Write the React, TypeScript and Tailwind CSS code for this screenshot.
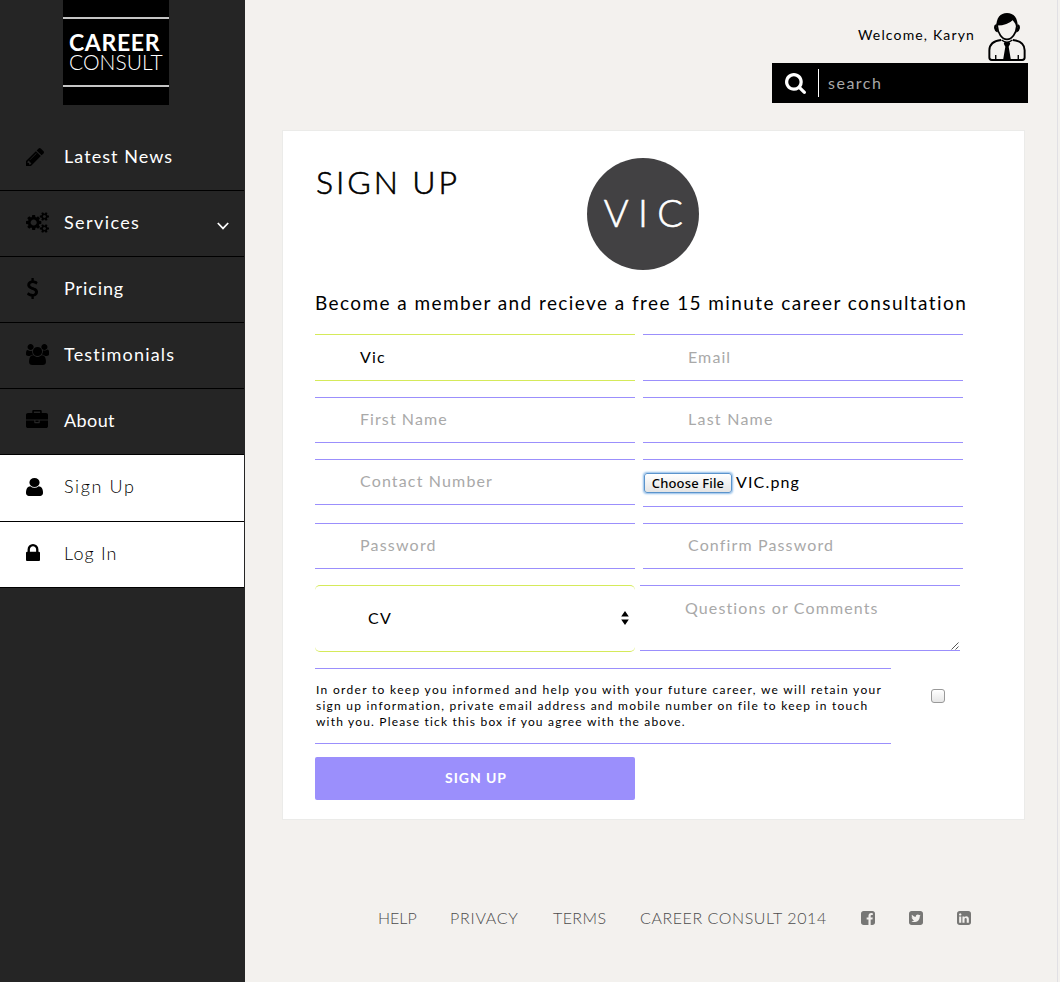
import type { ReactNode } from "react";

const paths = {
  pencil:
    "M491 1536l91-91-235-235-91 91v107h128v128h107zm523-928q0-22-22-22-10 0-17 7l-542 542q-7 7-7 17 0 22 22 22 10 0 17-7l542-542q7-7 7-17zm-54-192l416 416-832 832h-416v-416zm683 96q0 53-37 90l-166 166-416-416 166-165q36-38 90-38 53 0 91 38l235 234q37 39 37 91z",
  cogs:
    "M896 896q0-106-75-181t-181-75-181 75-75 181 75 181 181 75 181-75 75-181zm768 512q0-52-38-90t-90-38-90 38-38 90q0 53 37.5 90.5t90.5 37.5 90.5-37.5 37.5-90.5zm0-1024q0-52-38-90t-90-38-90 38-38 90q0 53 37.5 90.5t90.5 37.5 90.5-37.5 37.5-90.5zm-384 421v185q0 10-7 19.5t-16 10.5l-155 24q-11 35-32 76 34 48 90 115 7 11 7 20 0 12-7 19-23 30-82.5 89.5t-78.5 59.5q-11 0-21-7l-115-90q-37 19-77 31-11 108-23 155-7 24-30 24h-186q-11 0-20-7.5t-10-17.5l-23-153q-34-10-75-31l-118 89q-7 7-20 7-11 0-21-8-144-133-144-160 0-9 7-19 10-14 41-53t47-61q-23-44-35-82l-152-24q-10-1-17-9.5t-7-19.5v-185q0-10 7-19.5t16-10.5l155-24q11-35 32-76-34-48-90-115-7-11-7-20 0-12 7-20 22-30 82-89t79-59q11 0 21 7l115 90q34-18 77-32 11-108 23-154 7-24 30-24h186q11 0 20 7.5t10 17.5l23 153q34 10 75 31l118-89q8-7 20-7 11 0 21 8 144 133 144 160 0 8-7 19-12 16-42 54t-45 60q23 48 34 82l152 23q10 2 17 10.5t7 19.5zm640 533v140q0 16-149 31-12 27-30 52 51 113 51 138 0 4-4 7-122 71-124 71-8 0-46-47t-52-68q-20 2-30 2t-30-2q-14 21-52 68t-46 47q-2 0-124-71-4-3-4-7 0-25 51-138-18-25-30-52-149-15-149-31v-140q0-16 149-31 13-29 30-52-51-113-51-138 0-4 4-7 4-2 35-20t59-34 30-16q8 0 46 46.5t52 67.5q20-2 30-2t30 2q51-71 92-112l6-2q4 0 124 70 4 3 4 7 0 25-51 138 17 23 30 52 149 15 149 31zm0-1024v140q0 16-149 31-12 27-30 52 51 113 51 138 0 4-4 7-122 71-124 71-8 0-46-47t-52-68q-20 2-30 2t-30-2q-14 21-52 68t-46 47q-2 0-124-71-4-3-4-7 0-25 51-138-18-25-30-52-149-15-149-31v-140q0-16 149-31 13-29 30-52-51-113-51-138 0-4 4-7 4-2 35-20t59-34 30-16q8 0 46 46.5t52 67.5q20-2 30-2t30 2q51-71 92-112l6-2q4 0 124 70 4 3 4 7 0 25-51 138 17 23 30 52 149 15 149 31z",
  dollar:
    "M1362 1185q0 153-99.5 263.5t-258.5 136.5v175q0 14-9 23t-23 9h-135q-13 0-22.5-9.5t-9.5-22.5v-175q-66-9-127.5-31t-101.5-44.5-74-48-46.5-37.5-17.5-18q-17-21-2-41l103-135q7-10 23-12 15-2 24 9l2 2q113 99 243 125 37 8 74 8 81 0 142.5-43t61.5-122q0-28-15-53t-33.5-42-58.5-37.5-66-32-80-32.5q-39-16-61.5-25t-61.5-26.5-62.5-31-56.5-35.5-53.5-42.5-43.5-49-35.5-58-21-66.5-8.5-78q0-138 98-242t255-134v-180q0-13 9.5-22.5t22.5-9.5h135q14 0 23 9t9 23v176q57 6 110.5 23t87 33.5 63.5 37.5 39 29 15 14q17 18 5 38l-81 146q-8 15-23 16-14 3-27-7-3-3-14.5-12t-39-26.5-58.5-32-74.5-26-85.5-11.5q-95 0-155 43t-60 111q0 26 8.5 48t29.5 41.5 39.5 33 56 31 60.5 27 70 27.5q53 20 81 31.5t76 35 75.5 42.5 62 50 53 63.5 31.5 76.5 13 94z",
  users:
    "M593 896q-162 5-265 128h-134q-82 0-138-40.5t-56-118.5q0-353 124-353 6 0 43.5 21t97.5 42.5 119 21.5q67 0 133-23-5 37-5 66 0 159 93 293zm1071 637q0 120-73 189.5t-194 69.5h-874q-121 0-194-69.5t-73-189.5q0-53 3.5-103.5t14-109 26.5-108.5 43-97.5 62-81 85.5-53.5 111.5-20q10 0 43 21.5t73 48 107 48 135 21.5 135-21.5 107-48 73-48 43-21.5q61 0 111.5 20t85.5 53.5 62 81 43 97.5 26.5 108.5 14 109 3.5 103.5zm-1024-1277q0 106-75 181t-181 75-181-75-75-181 75-181 181-75 181 75 75 181zm704 384q0 159-112.5 271.5t-271.5 112.5-271.5-112.5-112.5-271.5 112.5-271.5 271.5-112.5 271.5 112.5 112.5 271.5zm576 225q0 78-56 118.5t-138 40.5h-134q-103-123-265-128 93-134 93-293 0-29-5-66 66 23 133 23 59 0 119-21.5t97.5-42.5 43.5-21q124 0 124 353zm-128-609q0 106-75 181t-181 75-181-75-75-181 75-181 181-75 181 75 75 181z",
  briefcase:
    "M640 256h512v-128h-512v128zm1152 640v480q0 66-47 113t-113 47h-1472q-66 0-113-47t-47-113v-480h672v160q0 26 19 45t45 19h320q26 0 45-19t19-45v-160h672zm-768 0v128h-256v-128h256zm768-480v384h-1792v-384q0-66 47-113t113-47h352v-160q0-40 28-68t68-28h576q40 0 68 28t28 68v160h352q66 0 113 47t47 113z",
  user:
    "M1536 1399q0 109-62.5 187t-150.5 78h-854q-88 0-150.5-78t-62.5-187q0-85 8.5-160.5t31.5-152 58.5-131 94-89 134.5-34.5q131 128 313 128t313-128q76 0 134.5 34.5t94 89 58.5 131 31.5 152 8.5 160.5zm-256-887q0 159-112.5 271.5t-271.5 112.5-271.5-112.5-112.5-271.5 112.5-271.5 271.5-112.5 271.5 112.5 112.5 271.5z",
  lock:
    "M640 768h512v-192q0-106-75-181t-181-75-181 75-75 181v192zm832 96v576q0 40-28 68t-68 28h-960q-40 0-68-28t-28-68v-576q0-40 28-68t68-28h32v-192q0-184 132-316t316-132 316 132 132 316v192h32q40 0 68 28t28 68z",
  search:
    "M1216 832q0-185-131.5-316.5t-316.5-131.5-316.5 131.5-131.5 316.5 131.5 316.5 316.5 131.5 316.5-131.5 131.5-316.5zm512 832q0 52-38 90t-90 38q-54 0-90-38l-343-342q-179 124-399 124-143 0-273.5-55.5t-225-150-150-225-55.5-273.5 55.5-273.5 150-225 225-150 273.5-55.5 273.5 55.5 225 150 150 225 55.5 273.5q0 220-124 399l343 343q37 37 37 90z",
  facebook:
    "M1376 128q119 0 203.5 84.5t84.5 203.5v960q0 119-84.5 203.5t-203.5 84.5h-188v-595h199l30-232h-229v-148q0-56 23.5-84t91.5-28l122-1v-207q-63-9-178-9-136 0-217.5 80t-81.5 226v171h-200v232h200v595h-532q-119 0-203.5-84.5t-84.5-203.5v-960q0-119 84.5-203.5t203.5-84.5h960z",
  twitter:
    "M1408 610q-56 25-121 34 68-40 93-117-65 38-134 51-61-66-153-66-87 0-148.5 61.5t-61.5 148.5q0 29 5 48-129-7-242-65t-192-155q-29 50-29 106 0 114 91 175-47-1-100-26v2q0 75 50 133.5t123 72.5q-29 8-51 8-13 0-39-4 21 63 74.5 104t121.5 42q-116 90-261 90-26 0-50-3 148 94 322 94 112 0 210-35.5t168-95 120.5-137 75-162 24.5-168.5q0-18-1-27 63-45 105-109zm256-194v960q0 119-84.5 203.5t-203.5 84.5h-960q-119 0-203.5-84.5t-84.5-203.5v-960q0-119 84.5-203.5t203.5-84.5h960q119 0 203.5 84.5t84.5 203.5z",
  linkedin:
    "M365 1414h231v-694h-231v694zm246-908q-1-52-36-86t-93-34-94.5 34-36.5 86q0 51 35.5 85.5t92.5 34.5h1q59 0 95-34.5t36-85.5zm585 908h231v-398q0-154-73-233t-193-79q-136 0-209 117h2v-101h-231q3 66 0 694h231v-388q0-38 7-56 15-35 45-59.5t74-24.5q116 0 116 157v371zm468-998v960q0 119-84.5 203.5t-203.5 84.5h-960q-119 0-203.5-84.5t-84.5-203.5v-960q0-119 84.5-203.5t203.5-84.5h960q119 0 203.5 84.5t84.5 203.5z",
};

type IconName = keyof typeof paths;

function Icon({ name, box, className }: { name: IconName; box: string; className: string }) {
  return (
    <svg viewBox={box} preserveAspectRatio="none" fill="currentColor" aria-hidden="true" className={className}>
      <path d={paths[name]} />
    </svg>
  );
}

interface NavItem {
  label: string;
  icon: IconName;
  box: string;
  iconClass: string;
  textClass: string;
  rowClass: string;
}

const nav: NavItem[] = [
  { label: "Latest News", icon: "pencil", box: "128 149 1515 1515", iconClass: "w-[18px] h-[18px]", textClass: "tracking-[1.05px]", rowClass: "h-[66px] pb-[2px]" },
  { label: "Services", icon: "cogs", box: "0 0 1920 1792", iconClass: "w-[23px] h-[21px]", textClass: "tracking-[1.4px]", rowClass: "h-[66px] pb-[2px]" },
  { label: "Pricing", icon: "dollar", box: "430 0 932 1792", iconClass: "ml-px w-[11px] h-[21px]", textClass: "tracking-[0.9px]", rowClass: "h-[66px] pb-[2px]" },
  { label: "Testimonials", icon: "users", box: "0 0 1920 1792", iconClass: "w-[23px] h-[21px]", textClass: "tracking-[1.2px]", rowClass: "h-[66px] pb-[2px]" },
  { label: "About", icon: "briefcase", box: "0 0 1792 1536", iconClass: "w-[22px] h-[18px] -mt-[4px]", textClass: "tracking-[0.4px]", rowClass: "h-[66px] pb-[2px]" },
  { label: "Sign Up", icon: "user", box: "256 128 1280 1536", iconClass: "w-[17px] h-[18px]", textClass: "tracking-[1.6px] font-light", rowClass: "h-[67px] pb-[3px] bg-white text-black" },
  { label: "Log In", icon: "lock", box: "320 128 1152 1408", iconClass: "w-[14px] h-[17px] -mt-[2px]", textClass: "tracking-[1.15px] font-light", rowClass: "h-[66px] pb-[3px] bg-white text-black" },
];

function Sidebar() {
  return (
    <aside className="w-[245px] shrink-0 bg-[#252525] text-white">
      <div className="ml-[63px] flex h-[105px] w-[106px] flex-col bg-black">
        <div className="mt-[17px] h-[2px] bg-[#c4c4c4]" />
        <div className="h-[66px] pt-[14px] pl-[6px] whitespace-nowrap">
          <div className="text-[23px] leading-[19px] font-bold tracking-[0.65px]">CAREER</div>
          <div className="text-[21px] leading-[19px] font-light">CONSULT</div>
        </div>
        <div className="h-[2px] bg-[#c4c4c4]" />
      </div>
      <nav className="mr-px mt-5">
        {nav.map((item) => (
          <a
            key={item.label}
            className={`flex items-center border-b border-black pl-[26px] pr-[15px] text-[18px] ${item.rowClass}`}
          >
            <span className="flex w-[38px] items-center text-black">
              <Icon name={item.icon} box={item.box} className={item.iconClass} />
            </span>
            <span className={item.textClass}>{item.label}</span>
            {item.label === "Services" && (
              <svg viewBox="0 0 12 8" fill="none" stroke="white" strokeWidth="1.7" className="mt-[6px] ml-auto h-2 w-3">
                <path d="M0.8 1l5.2 5.4L11.2 1" />
              </svg>
            )}
          </a>
        ))}
      </nav>
    </aside>
  );
}

function Avatar() {
  return (
    <svg viewBox="0 0 38 50" className="h-[49px] w-[38px]" fill="none" stroke="black" strokeWidth="2">
      <path d="M8 15.500C8 6 12 1 19 1s11 5 11 14.500" fill="black" stroke="none" />
      <path d="M9 13C14 13 21 11 25 7C26.500 10 29 11 29 14.500C28.500 22 24 28 19 28S9.500 22 9 14z" fill="#f3f1ee" strokeWidth="1.800" />
      <path d="M8 13.500C6 14 6.500 19 9.500 20M30 13.500C32 14 31.500 19 28.500 20" fill="black" />
      <path d="M13 28.500C5 29.500 1 33.500 1 39v7.500Q1 49 3.500 49h31Q37 49 37 46.500V39C37 33.500 33 29.500 25 28.500" />
      <path d="M13.500 28.500Q19 33 24.500 28.500M7.500 44v5M30.500 44v5" strokeWidth="1.400" />
      <path d="M16.500 30.500h5l.8 2-1.600 3L23 49h-8l2.300-13.500-1.600-3z" fill="black" stroke="none" />
    </svg>
  );
}

function Header() {
  return (
    <header className="mr-[31px] flex flex-col items-end">
      <div className="flex h-[63px] items-start">
        <span className="mt-[25px] mr-[13px] text-[14px] leading-5 tracking-[1.15px]">Welcome, Karyn</span>
        <div className="mt-3 mr-[2px]">
          <Avatar />
        </div>
      </div>
      <div className="flex h-10 w-64 items-center bg-black pl-[13px]">
        <Icon name="search" box="64 128 1664 1664" className="h-[21px] w-[21px] text-white" />
        <div className="-mt-px ml-3 h-7 w-px bg-white" />
        <span className="ml-[9px] text-[16px] tracking-[1.5px] text-[#a9a9a9]">search</span>
      </div>
    </header>
  );
}

function Field({ className, children }: { className: string; children: ReactNode }) {
  return (
    <div className={`flex w-[320px] items-center border-y pb-[2px] text-[16px] leading-5 whitespace-nowrap ${className}`}>
      {children}
    </div>
  );
}

const gray = "border-[#9b8ffc] pl-[45px] text-[#a9a9a9]";

function SignUpForm() {
  return (
    <form className="ml-8 flex flex-col gap-4">
      <div className="flex gap-2">
        <Field className="h-[47px] border-[#d5ea5a] pl-[45px] tracking-[1.2px] text-black">Vic</Field>
        <Field className={`h-[47px] tracking-[1.1px] ${gray}`}>Email</Field>
      </div>
      <div className="flex gap-2">
        <Field className={`h-[46px] tracking-[1.08px] ${gray}`}>First Name</Field>
        <Field className={`h-[46px] tracking-[1.25px] ${gray}`}>Last Name</Field>
      </div>
      <div className="flex gap-2">
        <Field className={`h-[46px] tracking-[1.15px] ${gray}`}>Contact Number</Field>
        <Field className="h-[48px] border-[#9b8ffc] text-black">
          <button
            type="button"
            className="mt-[2px] ml-px h-[20px] w-[88px] rounded-[3px] border border-[#5b94cc] bg-linear-to-b from-white to-[#e4e4e4] font-['Noto_Sans'] text-[13px] leading-[19px] font-medium tracking-[0.15px] shadow-[0_0_2px_1px_#8fbce8]"
          >
            Choose File
          </button>
          <span className="-mt-px ml-[4px] tracking-[1.15px]">VIC.png</span>
        </Field>
      </div>
      <div className="flex gap-2">
        <Field className={`h-[46px] tracking-[1.2px] ${gray}`}>Password</Field>
        <Field className={`h-[46px] tracking-[1.13px] ${gray}`}>Confirm Password</Field>
      </div>
      <div className="flex gap-[5px]">
        <Field className="h-[67px] justify-between rounded-[5px] border-[#d5ea5a] pl-[53px] pr-[6px] tracking-[1.3px] text-black">
          CV
          <svg viewBox="0 0 8 14" className="h-[14px] w-2">
            <path d="M4 0l3.800 5.500H.2zM4 14L.2 8.500h7.600z" fill="black" />
          </svg>
        </Field>
        <Field className={`h-[66px] justify-between !items-start !pb-0 ${gray}`}>
          <span className="mt-[12px] tracking-[1.12px]">Questions or Comments</span>
          <svg viewBox="0 0 8 8" className="mr-px h-2 w-2 self-end" stroke="#444" strokeWidth="0.900">
            <path d="M0.500 7.500l7-7M4.500 7.500l3-3" />
          </svg>
        </Field>
      </div>
      <div className="flex">
        <p className="h-[76px] w-[576px] border-y border-[#9b8ffc] pt-[13px] pl-px text-[12px] leading-4 whitespace-nowrap">
          <span className="block tracking-[1.31px]">
            In order to keep you informed and help you with your future career, we will retain your
          </span>
          <span className="block tracking-[1.24px]">
            sign up information, private email address and mobile number on file to keep in touch
          </span>
          <span className="block tracking-[1.18px]">with you. Please tick this box if you agree with the above.</span>
        </p>
        <div className="mt-[21px] ml-10 h-[14px] w-[14px] rounded-[3px] border border-[#999] bg-linear-to-b from-white to-[#e6e6e6]" />
      </div>
      <button
        type="button"
        className="-mt-[3px] h-[43px] w-[320px] rounded-[2px] bg-[#9b8ffc] pb-[2px] pl-[2px] text-[14px] font-bold tracking-[0.95px] text-white"
      >
        SIGN UP
      </button>
    </form>
  );
}

function Footer() {
  return (
    <footer className="mt-[88px] ml-[133px] flex h-5 items-center text-[16px] font-light whitespace-nowrap text-[#4c4c4c]">
      <span className="w-[72px]">HELP</span>
      <span className="w-[103px] tracking-[0.75px]">PRIVACY</span>
      <span className="w-[87px] tracking-[0.4px]">TERMS</span>
      <span className="w-[221px] tracking-[0.57px]">CAREER CONSULT 2014</span>
      <div className="flex gap-[34px] text-[#777775]">
        <Icon name="facebook" box="128 128 1536 1536" className="h-[14px] w-[14px]" />
        <Icon name="twitter" box="128 128 1536 1536" className="h-[14px] w-[14px]" />
        <Icon name="linkedin" box="128 128 1536 1536" className="h-[14px] w-[14px]" />
      </div>
    </footer>
  );
}

export default function App() {
  return (
    <div className="flex h-[982px] w-[1060px] overflow-hidden bg-[#f3f1ee] font-['Lato',sans-serif] text-black">
      <Sidebar />
      <main className="w-[815px] shrink-0">
        <div className="h-full w-[813px] border-r border-[#e1e0e4]">
          <div className="-mr-[2px]">
            <Header />
            <section className="mt-[27px] ml-[37px] h-[690px] w-[743px] border border-[#ebebe9] bg-white">
              <div className="flex h-[203px] flex-col">
                <div className="flex">
                  <h1 className="mt-[31px] ml-[33px] w-[271px] text-[32px] leading-10 font-light tracking-[2.9px] [-webkit-text-stroke:0.6px_black]">
                    SIGN UP
                  </h1>
                  <div className="mt-[27px] flex h-28 w-28 items-center justify-center rounded-full bg-[#424143] pb-[3px] pl-[10px] text-[38px] font-light tracking-[9.4px] text-white [-webkit-text-stroke:0.6px_white]">
                    VIC
                  </div>
                </div>
                <p className="mt-[21px] ml-[32px] text-[19px] leading-6 tracking-[1.42px] whitespace-nowrap">
                  Become a member and recieve a free 15 minute career consultation
                </p>
              </div>
              <SignUpForm />
            </section>
            <Footer />
          </div>
        </div>
      </main>
    </div>
  );
}
